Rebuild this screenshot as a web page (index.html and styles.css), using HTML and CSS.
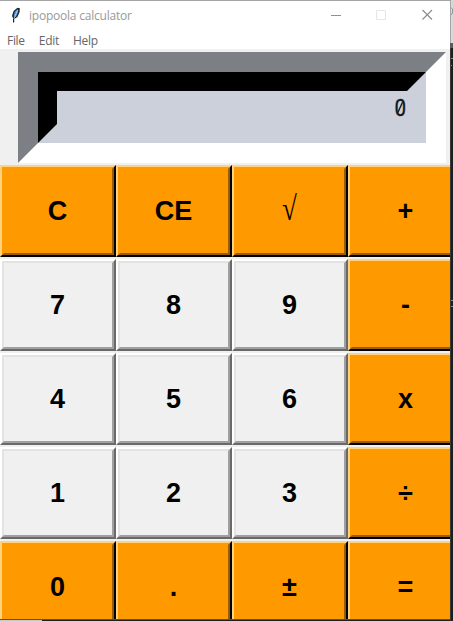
FILE: index.html
```html
<!DOCTYPE html>
<html lang="en">
<head>
<meta charset="utf-8">
<title>ipopoola calculator</title>
<link rel="stylesheet" href="styles.css">
</head>
<body>
<div class="desktop">
  <main class="window">
    <header class="titlebar">
      <svg class="feather" width="12" height="17" viewBox="0 0 12 17"><path d="M3 15.5V11L2 9L3.6 4L7.5 .8L9.8 1.2L9.6 5L7.4 10L4.2 12V15.5Z" fill="#16222d"/><path d="M3.6 9.5L4.8 4.5L8 2L8.2 5L6 10Z" fill="#4d8fdc"/><path d="M3.8 12L7.6 3" stroke="#b9d9f4" stroke-width=".8"/></svg>
      <span class="title">ipopoola calculator</span>
      <svg class="controls" width="102" height="12" viewBox="0 0 102 12" fill="none"><path d="M0 6.5H10" stroke="#8f8f8f"/><path d="M45.5 1.5H54.5V10.5H45.5Z" stroke="#e6e6e6"/><path d="M91.5 1L101 10.5M101 1L91.5 10.5" stroke="#8b8b8b" stroke-width="1.1"/></svg>
    </header>
    <nav class="menu"><span>File</span><span>Edit</span><span>Help</span></nav>
    <section class="screen"><div class="bevel"><div class="value"><span class="digit">0</span><svg class="slash" width="10" height="18" viewBox="0 0 10 18"><path d="M2.3 14.8L7.5 3.2" stroke="#101820" stroke-width="1.4"/></svg></div></div></section>
    <section class="keys">
      <div class="key op"><span>C</span></div><div class="key op"><span>CE</span></div><div class="key op"><span><b class="root">√</b></span></div><div class="key op"><span>+</span></div>
      <div class="key"><span>7</span></div><div class="key"><span>8</span></div><div class="key"><span>9</span></div><div class="key op"><span>-</span></div>
      <div class="key"><span>4</span></div><div class="key"><span>5</span></div><div class="key"><span>6</span></div><div class="key op"><span>x</span></div>
      <div class="key"><span>1</span></div><div class="key"><span>2</span></div><div class="key"><span>3</span></div><div class="key op"><span>÷</span></div>
      <div class="key op"><span>0</span></div><div class="key op"><span>.</span></div><div class="key op"><span>±</span></div><div class="key op"><span>=</span></div>
    </section>
  </main>
  <svg class="behind" width="3" height="621" viewBox="0 0 3 621" fill="none"><path d="M0 0H3V43H0Z" fill="#d9d9d9"/><path d="M0 43H3V48H0Z" fill="#5c5c5c"/><path d="M0 0H1V43H0Z" fill="#a5a5a5"/><path d="M0 48H1V621H0Z" fill="#3c3a37"/><path d="M1 7.5L2.5 9V13L1 15" stroke="#8b95a8"/><path d="M1 58.5H3M1 65.5H2M1 300.5H3M1 306.5H3" stroke="#8a8a86"/></svg>
</div>
</body>
</html>
```
FILE: styles.css
```css
* { box-sizing: border-box; }
body { margin: 0; overflow: hidden; }
.desktop {
  display: flex;
  width: 453px;
  height: 621px;
  background: linear-gradient(90deg, #c9cad0 42px, #1e1e1e 42px);
}
.window {
  width: 450px;
  height: 620px;
  overflow: hidden;
  background: #f0f0f0;
  border-top: 1px solid #a5a5a5;
  border-bottom: 1px solid #5c5044;
}
.behind { flex: none; background: #1e1e1e; }
.titlebar {
  display: flex;
  align-items: center;
  height: 30px;
  padding: 0 17px 2px 10px;
  background: #fff;
  font: 12px "Open Sans", sans-serif;
  color: #999;
}
.title { margin-left: 7px; letter-spacing: -0.22px; }
.controls { margin-left: auto; }
.menu {
  display: flex;
  gap: 14px;
  height: 18px;
  padding-left: 7px;
  background: #fff;
  font: 12px/19px "Open Sans", sans-serif;
  letter-spacing: -0.3px;
  color: #666;
}
.screen { height: 116px; padding: 3px 4px 2px 18px; }
.bevel {
  height: 111px;
  border: 20px solid;
  border-color: #7c7f84 #fff #fff #7c7f84;
}
.value {
  position: relative;
  height: 71px;
  border: 19px solid;
  border-color: #000 #ccd0da #ccd0da #000;
  background: #ccd0da;
  text-align: right;
  font: 24px/35px Roboto, sans-serif;
  color: #101820;
}
.digit { display: inline-block; transform: translateX(-0.5px) scaleX(.86); -webkit-text-stroke: .3px #101820; }
.slash { position: absolute; right: 2px; top: 8px; }
.keys {
  display: grid;
  grid-template-columns: repeat(4, 116px);
  grid-auto-rows: 92px;
  row-gap: 2px;
}
.key {
  border: 2px solid;
  border-color: #fff #696969 #696969 #fff;
  background: #f0f0f0;
  font: bold 27px "Liberation Sans", sans-serif;
  color: #000;
}
.key span {
  display: flex;
  align-items: center;
  justify-content: center;
  height: 88px;
  padding-right: 1px;
  border: 2px solid;
  border-color: #e3e3e3 #a0a0a0 #a0a0a0 #e3e3e3;
}
.op { border-color: #ffd27f #000 #000 #ffd27f; background: #ff9900; }
.op span { border-color: #ff9900 #995c00 #995c00 #ff9900; }
.root { font: 27px "Liberation Serif", serif; transform: translateY(-2px) scaleY(1.25); }
```
